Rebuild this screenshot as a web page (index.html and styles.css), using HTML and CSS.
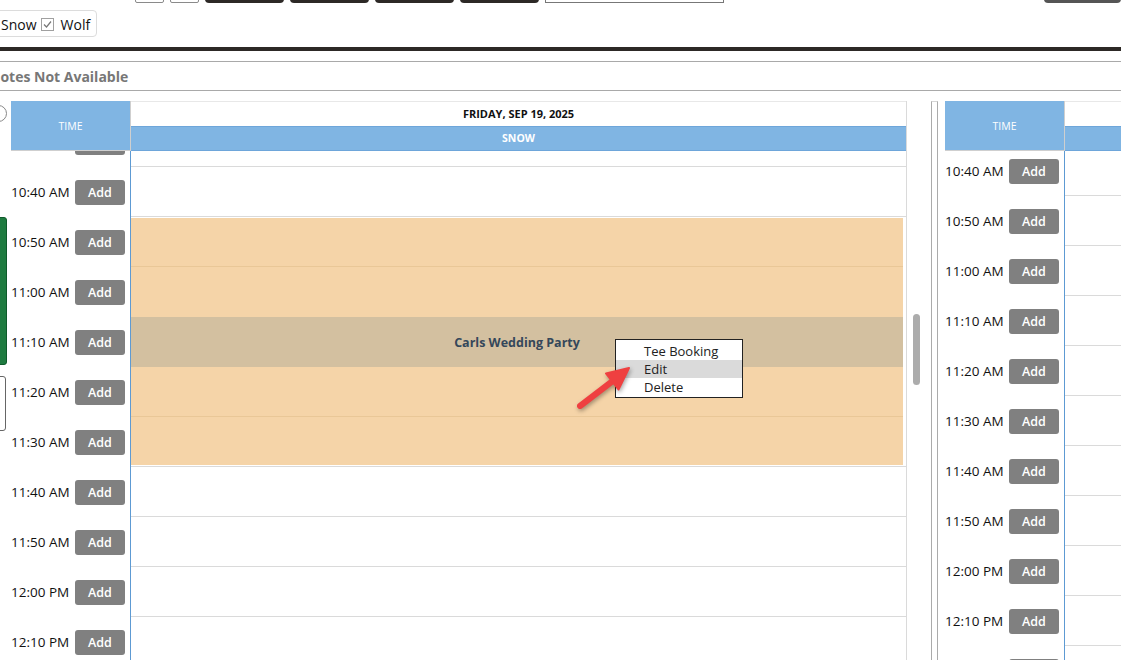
FILE: index.html
```html
<!DOCTYPE html>
<html>
<head>
  <meta charset="UTF-8">
  <title>Tee Sheet</title>
  <link rel="stylesheet" href="styles.css">
</head>
<body>

  <div class="toolbar">
    <span class="tool-box"></span>
    <span class="tool-box"></span>
    <span class="tool-btn"></span>
    <span class="tool-btn"></span>
    <span class="tool-btn"></span>
    <span class="tool-btn"></span>
    <span class="tool-input"></span>
    <span class="tool-right"></span>
  </div>

  <div class="filter-box">
    <span class="chk"><svg viewBox="0 0 13 13" width="13" height="13"><polyline points="3,6.5 5.5,9 10,3.5" fill="none" stroke="#777" stroke-width="1.2"/></svg></span>
    <span class="filter-label">Snow</span>
    <span class="chk"><svg viewBox="0 0 13 13" width="13" height="13"><polyline points="3,6.5 5.5,9 10,3.5" fill="none" stroke="#777" stroke-width="1.2"/></svg></span>
    <span class="filter-label">Wolf</span>
  </div>

  <div class="thick-rule"></div>

  <div class="notes-bar">Notes Not Available</div>

  <div class="cal">
    <div class="strip">
      <span class="strip-radio"></span>
      <span class="strip-green"></span>
      <span class="strip-box"></span>
    </div>

    <!-- left sheet -->
    <div class="sheet sheet-main">
      <div class="sheet-head">
        <div class="time-head">TIME</div>
        <div class="day-head">
          <div class="day-date">FRIDAY, SEP 19, 2025</div>
          <div class="day-band">SNOW</div>
        </div>
      </div>
      <div class="sheet-body">
        <div class="body-inner offset-main">
          <div class="time-col">
            <div class="time-row"><span class="time-label">10:30 AM</span><button class="add-btn">Add</button></div>
            <div class="time-row"><span class="time-label">10:40 AM</span><button class="add-btn">Add</button></div>
            <div class="time-row"><span class="time-label">10:50 AM</span><button class="add-btn">Add</button></div>
            <div class="time-row"><span class="time-label">11:00 AM</span><button class="add-btn">Add</button></div>
            <div class="time-row"><span class="time-label">11:10 AM</span><button class="add-btn">Add</button></div>
            <div class="time-row"><span class="time-label">11:20 AM</span><button class="add-btn">Add</button></div>
            <div class="time-row"><span class="time-label">11:30 AM</span><button class="add-btn">Add</button></div>
            <div class="time-row"><span class="time-label">11:40 AM</span><button class="add-btn">Add</button></div>
            <div class="time-row"><span class="time-label">11:50 AM</span><button class="add-btn">Add</button></div>
            <div class="time-row"><span class="time-label">12:00 PM</span><button class="add-btn">Add</button></div>
            <div class="time-row"><span class="time-label">12:10 PM</span><button class="add-btn">Add</button></div>
            <div class="time-row"><span class="time-label">12:20 PM</span><button class="add-btn">Add</button></div>
          </div>
          <div class="slot-col">
            <div class="slot"></div>
            <div class="slot"></div>
            <div class="event">
              <div class="event-row first"></div>
              <div class="event-row"></div>
              <div class="event-row title">Carls Wedding Party</div>
              <div class="event-row lined"></div>
              <div class="event-row last"></div>
            </div>
            <div class="slot"></div>
            <div class="slot"></div>
            <div class="slot"></div>
            <div class="slot"></div>
            <div class="slot"></div>
          </div>
        </div>
      </div>
    </div>

    <div class="gutter"><span class="thumb"></span></div>
    <div class="divider"></div>

    <!-- right sheet -->
    <div class="sheet sheet-side">
      <div class="sheet-head">
        <div class="time-head">TIME</div>
        <div class="day-head">
          <div class="day-date"></div>
          <div class="day-band"></div>
        </div>
      </div>
      <div class="sheet-body">
        <div class="body-inner offset-side">
          <div class="time-col">
            <div class="time-row"><span class="time-label">10:40 AM</span><button class="add-btn">Add</button></div>
            <div class="time-row"><span class="time-label">10:50 AM</span><button class="add-btn">Add</button></div>
            <div class="time-row"><span class="time-label">11:00 AM</span><button class="add-btn">Add</button></div>
            <div class="time-row"><span class="time-label">11:10 AM</span><button class="add-btn">Add</button></div>
            <div class="time-row"><span class="time-label">11:20 AM</span><button class="add-btn">Add</button></div>
            <div class="time-row"><span class="time-label">11:30 AM</span><button class="add-btn">Add</button></div>
            <div class="time-row"><span class="time-label">11:40 AM</span><button class="add-btn">Add</button></div>
            <div class="time-row"><span class="time-label">11:50 AM</span><button class="add-btn">Add</button></div>
            <div class="time-row"><span class="time-label">12:00 PM</span><button class="add-btn">Add</button></div>
            <div class="time-row"><span class="time-label">12:10 PM</span><button class="add-btn">Add</button></div>
            <div class="time-row"><span class="time-label">12:20 PM</span><button class="add-btn">Add</button></div>
          </div>
          <div class="slot-col">
            <div class="slot"></div>
            <div class="slot"></div>
            <div class="slot"></div>
            <div class="slot"></div>
            <div class="slot"></div>
            <div class="slot"></div>
            <div class="slot"></div>
            <div class="slot"></div>
            <div class="slot"></div>
            <div class="slot"></div>
            <div class="slot"></div>
          </div>
        </div>
      </div>
    </div>

    <div class="context-menu">
      <div class="menu-item">Tee Booking</div>
      <div class="menu-item active">Edit</div>
      <div class="menu-item">Delete</div>
    </div>

    <svg class="pointer" viewBox="0 0 70 55" width="70" height="55">
      <line x1="10" y1="45" x2="44" y2="19" stroke="#ef4040" stroke-width="6" stroke-linecap="round"/>
      <polygon points="59,7 48.5,28.5 36,12.5" fill="#ef4040" stroke="#ef4040" stroke-width="2" stroke-linejoin="round"/>
    </svg>
  </div>

</body>
</html>
```

FILE: styles.css
```css
:root {
  --head-blue: #80b5e3;
  --line-blue: #5d9ad3;
  --grid-line: #dadada;
  --peach: #f5d4a8;
  --peach-line: #e9c797;
  --tan: #d3c0a0;
  --btn-gray: #808080;
  --dark: #2d2926;
}
html, body {
  margin: 0;
  padding: 0;
}
body {
  width: 1121px;
  height: 660px;
  overflow: hidden;
  background: #fff;
  font-family: "Open Sans", "Noto Sans", Arial, sans-serif;
  color: #111;
}
.toolbar {
  display: flex;
  gap: 6px;
  height: 23px;
  margin-top: -20px;
  padding-left: 135px;
}
.tool-box {
  width: 27px;
  border: 1px solid #8a8a8a;
  border-radius: 2px;
  background: #fff;
}
.tool-btn {
  width: 79px;
  background: var(--dark);
  border-radius: 4px;
}
.tool-input {
  width: 177px;
  border: 1px solid #777;
  background: #fff;
}
.tool-right {
  width: 77px;
  margin-left: auto;
  background: #555;
  border-radius: 4px;
}
.filter-box {
  display: flex;
  width: fit-content;
  align-items: center;
  height: 23px;
  margin: 7px 0 0 -24px;
  padding: 2px 6px 0;
  border: 1px solid #dcdcdc;
  border-radius: 4px;
  font-size: 14px;
}
.chk {
  display: inline-flex;
  width: 13px;
  height: 13px;
  box-sizing: border-box;
  border: 1px solid #a0a0a0;
  background: #fff;
  margin-right: 5px;
}
.chk svg {
  margin: -1px;
}
.filter-label {
  margin-right: 4px;
}
.filter-label:last-child {
  margin-right: 0;
  margin-left: 2px;
}
.thick-rule {
  height: 4px;
  margin-top: 10px;
  background: var(--dark);
}
.notes-bar {
  margin-top: 10px;
  height: 27px;
  padding-top: 1px;
  line-height: 27px;
  border-top: 1px solid #a9a9a9;
  border-bottom: 1px solid #a9a9a9;
  margin-left: -11px;
  font-size: 14px;
  font-weight: 700;
  color: #777;
}
.cal {
  position: relative;
  display: flex;
  margin-top: 10px;
  height: 559px;
}
.strip {
  width: 11px;
  flex: none;
  display: flex;
  flex-direction: column;
}
.strip-radio {
  width: 15px;
  height: 15px;
  margin: 4px 0 0 -10px;
  border: 1px solid #888;
  border-radius: 50%;
}
.strip-green {
  width: 10px;
  height: 146px;
  margin: 95px 0 0 -5px;
  background: #1e7b40;
  border: 1px solid #0e5a2b;
  border-radius: 3px;
}
.strip-box {
  width: 9px;
  height: 53px;
  margin: 11px 0 0 -5px;
  border: 1px solid #666;
  border-radius: 3px;
}
.sheet {
  flex: none;
  display: flex;
  flex-direction: column;
}
.sheet-main {
  width: 896px;
}
.sheet-side {
  flex: 1;
  min-width: 0;
}
.sheet-head {
  display: flex;
  height: 50px;
  flex: none;
}
.time-head {
  flex: none;
  width: 120px;
  box-sizing: border-box;
  border-right: 1px solid #cfcfcf;
  border-bottom: 1px solid #cfcfcf;
  background: var(--head-blue);
  color: #fff;
  font-size: 10.5px;
  display: flex;
  align-items: center;
  justify-content: center;
}
.day-head {
  flex: 1;
  display: flex;
  flex-direction: column;
  border-right: 1px solid var(--grid-line);
}
.sheet-side .day-head {
  border-right: none;
}
.day-date {
  height: 24px;
  border-top: 1px solid #e8e8e8;
  font-size: 11px;
  font-weight: 700;
  text-align: center;
  line-height: 24px;
  color: #111;
}
.day-band {
  height: 23px;
  border-top: 1px solid #6ea6da;
  border-bottom: 1px solid #6ea6da;
  background: var(--head-blue);
  color: #fff;
  font-size: 10.5px;
  font-weight: 700;
  text-align: center;
  line-height: 23px;
}
.sheet-body {
  flex: 1;
  overflow: hidden;
}
.body-inner {
  display: flex;
}
.offset-main {
  margin-top: -34px;
}
.offset-side {
  margin-top: -5px;
}
.time-col {
  width: 119px;
  flex: none;
}
.time-row {
  height: 50px;
  display: flex;
  align-items: center;
}
.time-label {
  width: 64px;
  font-size: 13.5px;
  white-space: nowrap;
}
.add-btn {
  width: 50px;
  height: 25px;
  padding: 0;
  border: none;
  border-radius: 3px;
  background: var(--btn-gray);
  color: #fff;
  font-family: inherit;
  font-size: 12.5px;
  font-weight: 600;
}
.slot-col {
  flex: 1;
  border-left: 1px solid var(--line-blue);
  border-right: 1px solid var(--grid-line);
}
.sheet-side .slot-col {
  border-right: none;
}
.slot {
  height: 49px;
  border-bottom: 1px solid var(--grid-line);
}
.event {
  height: 247px;
  padding: 1px 3px 1px 0;
  border-bottom: 1px solid var(--grid-line);
}
.event-row {
  height: 50px;
  background: var(--peach);
}
.event-row.first {
  height: 48px;
  border-bottom: 1px solid var(--peach-line);
}
.event-row.lined {
  height: 49px;
  border-bottom: 1px solid var(--peach-line);
}
.event-row.last {
  height: 48px;
}
.event-row.title {
  background: var(--tan);
  display: flex;
  align-items: center;
  justify-content: center;
  font-size: 12.5px;
  font-weight: 700;
  color: #34475a;
}
.gutter {
  width: 24px;
  flex: none;
  padding-left: 6px;
  box-sizing: border-box;
}
.thumb {
  display: block;
  width: 7px;
  height: 71px;
  margin-top: 213px;
  border-radius: 4px;
  background: #acacac;
}
.divider {
  width: 5px;
  flex: none;
  margin-right: 7px;
  border: 1px solid #ababab;
  border-bottom: none;
  border-top-color: #d6d6d6;
}
.context-menu {
  position: absolute;
  left: 615px;
  top: 238px;
  width: 126px;
  padding: 2px 0 1px;
  border: 1px solid #222;
  background: #fff;
  font-size: 13px;
  color: #222;
}
.menu-item {
  height: 18px;
  line-height: 18px;
  padding-left: 28px;
}
.menu-item.active {
  background: #dadada;
}
.pointer {
  position: absolute;
  left: 570px;
  top: 260px;
  filter: drop-shadow(1px 2px 2px rgba(0, 0, 0, 0.35));
}
```
